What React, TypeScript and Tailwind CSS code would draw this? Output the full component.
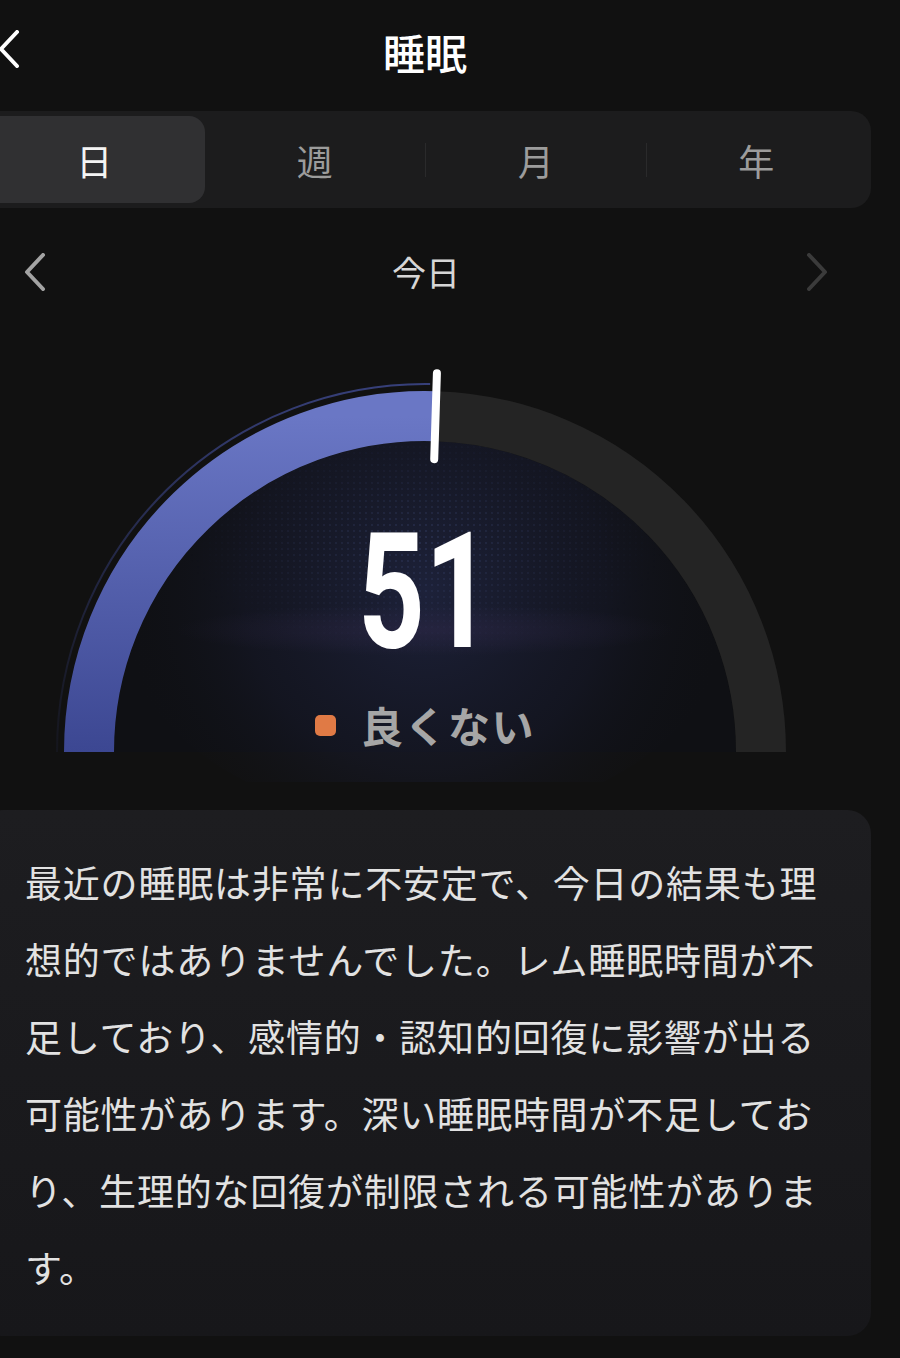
import type { ReactNode } from 'react'

const tabs = ['日', '週', '月', '年']
const score = 51

const summary =
  '最近の睡眠は非常に不安定で、今日の結果も理想的ではありませんでした。レム睡眠時間が不足しており、感情的・認知的回復に影響が出る可能性があります。深い睡眠時間が不足しており、生理的な回復が制限される可能性があります。'

// gauge geometry, in the svg's own coordinates
const CX = 446
const CY = 440
const R = 336

const polar = (r: number, deg: number) => {
  const a = (deg * Math.PI) / 180
  return { x: CX + r * Math.cos(a), y: CY - r * Math.sin(a) }
}

function Chevron({ dir, className }: { dir: 'left' | 'right'; className: string }) {
  const d = dir === 'left' ? 'M19 2 L3 19 L19 36' : 'M3 2 L19 19 L3 36'
  return (
    <svg width="22" height="38" viewBox="0 0 22 38" className={className}>
      <path d={d} fill="none" stroke="currentColor" strokeWidth="4" strokeLinecap="round" strokeLinejoin="round" />
    </svg>
  )
}

function Gauge() {
  const angle = 180 - (score / 100) * 180
  const start = polar(R, 180)
  const mid = polar(R, angle)
  const end = polar(R, 0)
  const glowStart = polar(368, 180)
  const glowEnd = polar(368, angle + 1)
  const tickIn = polar(293, angle)
  const tickOut = polar(379, angle)

  return (
    <svg width="892" height="470" viewBox="0 0 892 470" className="absolute inset-0">
      <defs>
        <linearGradient id="blue" x1="0" y1="104" x2="0" y2="440" gradientUnits="userSpaceOnUse">
          <stop offset="0" stopColor="#6a77c5" />
          <stop offset="1" stopColor="#3c4792" />
        </linearGradient>
        <linearGradient id="rim" x1="0" y1="72" x2="0" y2="440" gradientUnits="userSpaceOnUse">
          <stop offset="0" stopColor="#3b4585" stopOpacity="0.9" />
          <stop offset="1" stopColor="#2a3060" stopOpacity="0.15" />
        </linearGradient>
        <radialGradient id="haze" cx="446" cy="280" r="300" gradientUnits="userSpaceOnUse">
          <stop offset="0" stopColor="#23294a" stopOpacity="0.7" />
          <stop offset="0.6" stopColor="#1a1d33" stopOpacity="0.4" />
          <stop offset="1" stopColor="#111218" stopOpacity="0" />
        </radialGradient>
        <radialGradient id="band" cx="0.5" cy="0.5" r="0.5">
          <stop offset="0" stopColor="#352c50" stopOpacity="0.4" />
          <stop offset="1" stopColor="#352c50" stopOpacity="0" />
        </radialGradient>
        <radialGradient id="dotFade" cx="0.5" cy="0.5" r="0.5">
          <stop offset="0" stopColor="#fff" stopOpacity="1" />
          <stop offset="1" stopColor="#fff" stopOpacity="0" />
        </radialGradient>
        <pattern id="dots" width="6" height="6" patternUnits="userSpaceOnUse">
          <circle cx="3" cy="3" r="0.9" fill="#4a5a92" />
        </pattern>
        <mask id="dotMask">
          <ellipse cx="446" cy="230" rx="240" ry="120" fill="url(#dotFade)" />
        </mask>
        <clipPath id="inside">
          <circle cx={CX} cy={CY} r="311" />
        </clipPath>
      </defs>

      <g clipPath="url(#inside)">
        <rect x="0" y="0" width="892" height={CY} fill="#0f1014" />
        <ellipse cx="446" cy="290" rx="310" ry="220" fill="url(#haze)" />
        <rect x="150" y="100" width="600" height="260" fill="url(#dots)" mask="url(#dotMask)" opacity="0.35" />
        <ellipse cx="446" cy="318" rx="250" ry="26" fill="url(#band)" />
      </g>

      <path
        d={`M ${glowStart.x} ${glowStart.y} A 368 368 0 0 1 ${glowEnd.x} ${glowEnd.y}`}
        fill="none"
        stroke="url(#rim)"
        strokeWidth="2"
      />
      <path
        d={`M ${mid.x} ${mid.y} A ${R} ${R} 0 0 1 ${end.x} ${end.y}`}
        fill="none"
        stroke="#242424"
        strokeWidth="50"
      />
      <path
        d={`M ${start.x} ${start.y} A ${R} ${R} 0 0 1 ${mid.x} ${mid.y}`}
        fill="none"
        stroke="url(#blue)"
        strokeWidth="50"
      />
      <line
        x1={tickIn.x}
        y1={tickIn.y}
        x2={tickOut.x}
        y2={tickOut.y}
        stroke="#ffffff"
        strokeWidth="8"
        strokeLinecap="round"
      />
    </svg>
  )
}

function Card({ children }: { children: ReactNode }) {
  return (
    <div className="mt-[28px] rounded-[24px] bg-gradient-to-b from-[#1d1d20] to-[#17171a] pl-[46px] pr-[46px] pt-[34px] pb-[30px]">
      {children}
    </div>
  )
}

export default function App() {
  return (
    <div className="w-[900px] min-h-[1358px] overflow-hidden bg-[#111111] font-['Noto_Sans_CJK_JP','Noto_Sans',sans-serif] text-white">
      <div className="ml-[-21px] w-[892px]">
        <div className="relative flex h-[104px] items-center justify-center">
          <div className="absolute left-[19px] top-[30px] text-white">
            <Chevron dir="left" className="" />
          </div>
          <h1 className="text-[42px] font-medium leading-none">睡眠</h1>
        </div>

        <div className="mt-[7px] flex h-[97px] items-stretch rounded-[20px] bg-[#1c1c1d] p-[5px]">
          {tabs.map((t, i) => (
            <div key={t} className="flex flex-1 items-stretch">
              {i >= 2 && <div className="h-[34px] w-px self-center bg-[#2a2a2b]" />}
              <div
                className={
                  i === 0
                    ? 'flex flex-1 items-center justify-center rounded-[16px] bg-[#303032] text-[36px] leading-none text-[#f4f4f4]'
                    : 'flex flex-1 items-center justify-center text-[36px] leading-none text-[#9c9c9c]'
                }>
                {t}
              </div>
            </div>
          ))}
        </div>

        <div className="mt-[24px] flex h-[80px] items-center justify-between pl-[45px] pr-[43px]">
          <Chevron dir="left" className="text-[#a3a3a3]" />
          <span className="text-[34px] leading-none text-[#d6d6d6]">今日</span>
          <Chevron dir="right" className="text-[#3b3b3b]" />
        </div>

        <div className="relative h-[470px]">
          <Gauge />
          <div className="relative flex flex-col items-center pt-[199px]">
            <div className="flex h-[162px] w-[200px] justify-center">
              <span className="inline-block scale-x-[0.72] font-['Roboto',sans-serif] text-[162px] font-bold leading-[162px] text-white">
                {score}
              </span>
            </div>
            <div className="mt-[31px] flex h-[42px] items-center gap-[25px]">
              <span className="h-[21px] w-[21px] rounded-[5px] bg-[#e07a45]" />
              <span className="text-[42px] font-bold leading-[42px] tracking-[1.5px] text-[#a6a6a6]">良くない</span>
            </div>
          </div>
        </div>

        <Card>
          <p className="text-[37px] leading-[77px] tracking-[0.8px] text-[#e2e2e2]">{summary}</p>
        </Card>
      </div>
    </div>
  )
}
